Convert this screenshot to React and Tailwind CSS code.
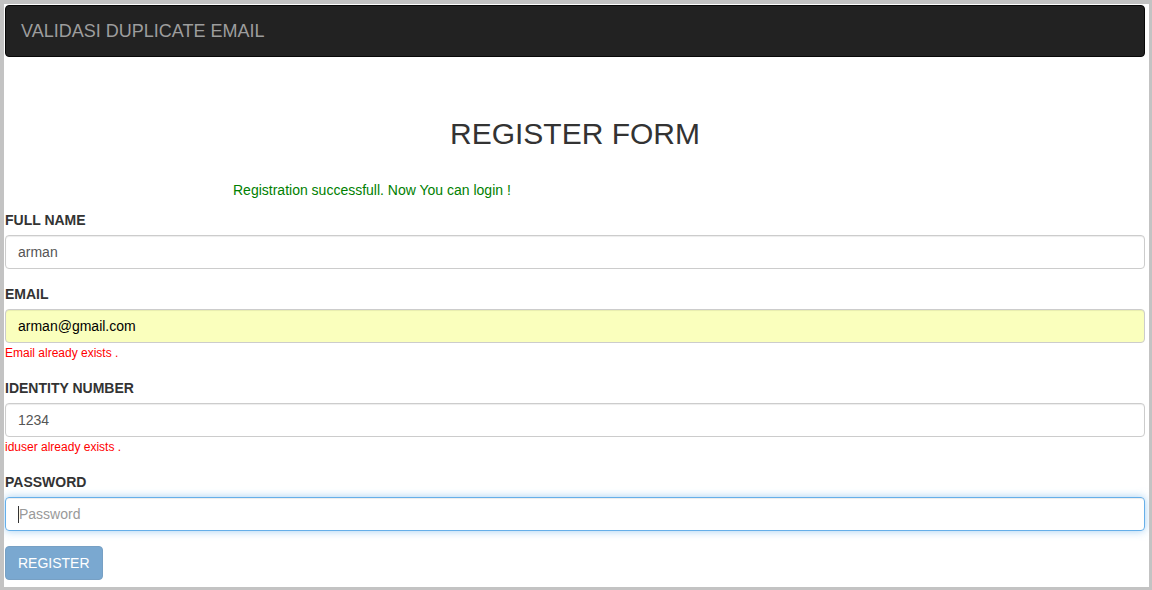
export default function App() {
  const font = { fontFamily: '"Liberation Sans", Arial, sans-serif' };
  return (
    <div className="w-[1152px] h-[590px] bg-[#c3c3c3] pt-[4px] pl-[4px] overflow-hidden" style={font}>
      <div className="w-[1145px] h-[583px] bg-white pt-[1px] pl-[1px] overflow-hidden">
        <div className="w-[1140px]">
          <div className="h-[52px] border border-[#080808] bg-[#222222] rounded-[4px] pl-[15px] text-[18px] leading-[50px] text-[#9d9d9d]">
            VALIDASI DUPLICATE EMAIL
          </div>
          <h1 className="mt-[60px] text-center text-[30px] leading-[33px] text-[#333333] font-normal">REGISTER FORM</h1>
          <div className="mt-[30px] pl-[228px] text-[14px] leading-[20px] text-[#008000]">
            Registration successfull. Now You can login !
          </div>
          <Field label="FULL NAME" mt="mt-[10px]" value="arman" />
          <Field label="EMAIL" value="arman@gmail.com" autofill error="Email already exists ." />
          <Field label="IDENTITY NUMBER" value="1234" error="iduser already exists ." />
          <div className="mt-[15px]">
            <div className="text-[14px] leading-[20px] font-bold text-[#333333] mb-[5px]">PASSWORD</div>
            <div className="h-[34px] border border-[#66afe9] rounded-[4px] px-[12px] flex items-center text-[14px] text-[#999999] shadow-[inset_0_1px_1px_rgba(0,0,0,0.075),0_0_8px_rgba(102,175,233,0.6)]">
              <span className="inline-block w-[1px] h-[17px] bg-[#333333] mr-[0px]" />
              <span>Password</span>
            </div>
          </div>
          <div className="mt-[15px]">
            <button className="h-[34px] px-[12px] border border-[#77a0c4] bg-[#7aa8d0] text-white text-[14px] rounded-[4px]" style={font}>
              REGISTER
            </button>
          </div>
        </div>
      </div>
    </div>
  );
}

function Field({ label, value, autofill, error, mt = "mt-[15px]" }) {
  return (
    <div className={mt}>
      <div className="text-[14px] leading-[20px] font-bold text-[#333333] mb-[5px]">{label}</div>
      <div
        className={
          "h-[34px] border border-[#cccccc] rounded-[4px] px-[12px] flex items-center text-[14px] shadow-[inset_0_1px_1px_rgba(0,0,0,0.075)] " +
          (autofill ? "bg-[#faffbd] text-black" : "bg-white text-[#555555]")
        }
      >
        {value}
      </div>
      {error && <div className="text-[12px] leading-[20px] text-[#ff0000]">{error}</div>}
    </div>
  );
}
